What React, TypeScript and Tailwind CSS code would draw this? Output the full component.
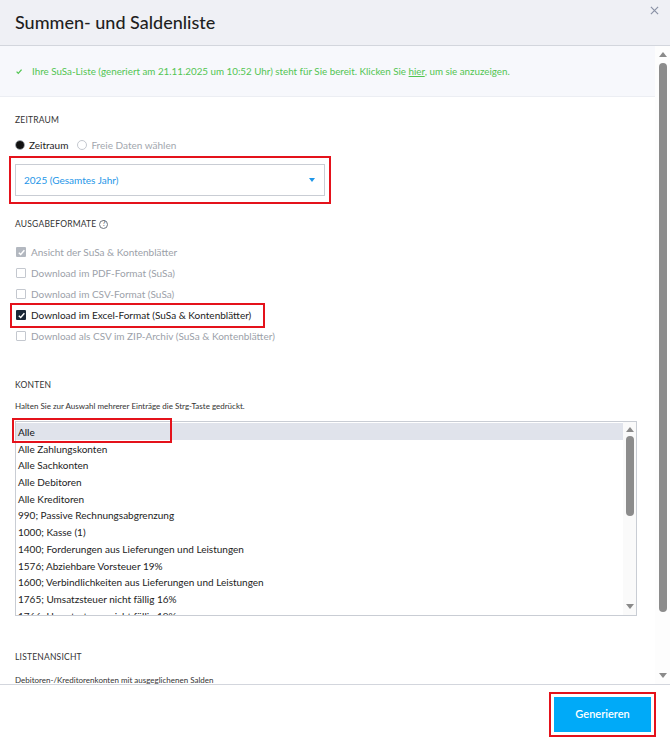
import React from 'react';

const formats = [
  { label: 'Ansicht der SuSa & Kontenblätter', state: 'locked' },
  { label: 'Download im PDF-Format (SuSa)', state: 'off' },
  { label: 'Download im CSV-Format (SuSa)', state: 'off' },
  { label: 'Download im Excel-Format (SuSa & Kontenblätter)', state: 'on' },
  { label: 'Download als CSV im ZIP-Archiv (SuSa & Kontenblätter)', state: 'off' },
];

const accounts = [
  'Alle',
  'Alle Zahlungskonten',
  'Alle Sachkonten',
  'Alle Debitoren',
  'Alle Kreditoren',
  '990; Passive Rechnungsabgrenzung',
  '1000; Kasse (1)',
  '1400; Forderungen aus Lieferungen und Leistungen',
  '1576; Abziehbare Vorsteuer 19%',
  '1600; Verbindlichkeiten aus Lieferungen und Leistungen',
  '1765; Umsatzsteuer nicht fällig 16%',
  '1766; Umsatzsteuer nicht fällig 19%',
];

function Check({ className }: { className?: string }) {
  return (
    <svg viewBox="0 0 10 10" className={className} fill="none">
      <path d="M2 5.2 4.1 7.3 8.2 2.6" stroke="currentColor" strokeWidth="1.6" />
    </svg>
  );
}

function Checkbox({ state }: { state: string }) {
  if (state === 'locked') {
    return (
      <span className="flex h-[10px] w-[10px] items-center justify-center rounded-[1px] bg-[#b3b8c0] text-white">
        <Check className="h-[9px] w-[9px]" />
      </span>
    );
  }
  if (state === 'on') {
    return (
      <span className="flex h-[10px] w-[10px] items-center justify-center rounded-[1px] bg-[#1b2838] text-white">
        <Check className="h-[9px] w-[9px]" />
      </span>
    );
  }
  return <span className="h-[10px] w-[10px] rounded-[1px] border border-[#c4c8cf] bg-white" />;
}

function FormatRow({ label, state }: { label: string; state: string }) {
  return (
    <div className="flex h-[21px] items-center gap-[5px] pl-[1px]">
      <Checkbox state={state} />
      <span className={state === 'on' ? 'text-[10px] text-[#222]' : 'text-[10px] text-[#9ca1a9]'}>{label}</span>
    </div>
  );
}

function SectionLabel({ children }: { children: React.ReactNode }) {
  return <div className="h-[12px] text-[8.5px] leading-[12px] tracking-[0.2px] text-[#333]">{children}</div>;
}

function Arrow({ up }: { up?: boolean }) {
  return (
    <svg viewBox="0 0 8 5" className="h-[5px] w-[8px] text-[#8a8a8a]">
      <path d={up ? 'M0 5 4 0 8 5Z' : 'M0 0 4 5 8 0Z'} fill="currentColor" />
    </svg>
  );
}

export default function App() {
  return (
    <div className="flex h-[738px] w-[670px] flex-col overflow-hidden bg-white font-['Lato',sans-serif] text-[#222]">
      {/* header */}
      <div className="relative flex h-[46px] shrink-0 items-center border-b border-[#d3d6dd] bg-[#eff0f5] pl-[15px]">
        <h1 className="text-[18px] font-medium text-[#1f1f1f]">Summen- und Saldenliste</h1>
        <svg viewBox="0 0 10 10" className="absolute right-[11px] top-[6px] h-[9px] w-[9px] text-[#8991a5]">
          <path d="M1 1 9 9M9 1 1 9" stroke="currentColor" strokeWidth="1.3" />
        </svg>
      </div>

      {/* body */}
      <div className="flex h-[638px] shrink-0">
        <div className="w-[655px] overflow-hidden">
          <div className="flex h-[51px] items-center gap-[9px] border-b border-[#eceef3] bg-[#f7f8fc] pl-[15px] text-[9.8px] text-[#52c552]">
            <Check className="h-[9px] w-[8px]" />
            <span>
              Ihre SuSa-Liste (generiert am 21.11.2025 um 10:52 Uhr) steht für Sie bereit. Klicken Sie{' '}
              <span className="underline">hier</span>, um sie anzuzeigen.
            </span>
          </div>

          <div className="pl-[15px] pr-[18px]">
            <div className="mt-[17px]">
              <SectionLabel>ZEITRAUM</SectionLabel>
            </div>
            <div className="mt-[12px] flex h-[14px] items-center text-[10px]">
              <span className="flex h-[10px] w-[10px] items-center justify-center rounded-full border border-[#9aa0a8] bg-white">
                <span className="h-[8px] w-[8px] rounded-full bg-[#111]" />
              </span>
              <span className="ml-[4px] text-[#222]">Zeitraum</span>
              <span className="ml-[9px] h-[10px] w-[10px] rounded-full border border-[#c4c8cf] bg-white" />
              <span className="ml-[4px] text-[#a2a7ae]">Freie Daten wählen</span>
            </div>

            <div className="-ml-[6px] mt-[4px] w-[322px] border-2 border-[#e4121b] px-[4px] py-[6px]">
              <div className="flex h-[32px] items-center justify-between border border-[#c9cdd4] pl-[8px] pr-[9px] text-[10px] text-[#1e96e8]">
                <span>2025 (Gesamtes Jahr)</span>
                <svg viewBox="0 0 6 4" className="h-[4px] w-[6px]">
                  <path d="M0 0 3 4 6 0Z" fill="currentColor" />
                </svg>
              </div>
            </div>

            <div className="mt-[14px] flex items-center gap-[3px]">
              <SectionLabel>AUSGABEFORMATE</SectionLabel>
              <span className="flex h-[9px] w-[9px] items-center justify-center rounded-full border border-[#6d7480] text-[6.5px] font-bold leading-none text-[#6d7480]">
                ?
              </span>
            </div>

            <div className="mt-[11.5px]">
              {formats.map((f) =>
                f.state === 'on' ? (
                  <div key={f.label} className="-my-[2px] -ml-[5px] w-fit border-2 border-[#e4121b] pl-[3px] pr-[12px]">
                    <FormatRow label={f.label} state={f.state} />
                  </div>
                ) : (
                  <FormatRow key={f.label} label={f.label} state={f.state} />
                )
              )}
            </div>

            <div className="mt-[32.5px]">
              <SectionLabel>KONTEN</SectionLabel>
            </div>
            <div className="mt-[9px] h-[12px] text-[8px] leading-[12px] text-[#333]">
              Halten Sie zur Auswahl mehrerer Einträge die Strg-Taste gedrückt.
            </div>

            <div className="relative mt-[9px] flex h-[195px] border border-[#c9cdd4]">
              <div className="flex-1 overflow-hidden pt-[1px]">
                {accounts.map((a, i) => (
                  <div
                    key={a}
                    className={
                      i === 0
                        ? 'h-[16.7px] bg-[#e0e3eb] pl-[2px] text-[10px] leading-[18px] text-[#111]'
                        : 'h-[16.7px] pl-[2px] text-[10px] leading-[18px] text-[#222]'
                    }
                  >
                    {a}
                  </div>
                ))}
              </div>
              <div className="flex w-[13px] flex-col items-center bg-[#fafafa] pt-[5px]">
                <Arrow up />
                <div className="mt-[4px] h-[80px] w-[8px] rounded-full bg-[#8c8c8c]" />
                <div className="flex-1" />
                <div className="mb-[6px]">
                  <Arrow />
                </div>
              </div>
              <div className="absolute -left-[4px] -top-[4px] h-[25px] w-[160px] border-2 border-[#e4121b]" />
            </div>

            <div className="mt-[35px]">
              <SectionLabel>LISTENANSICHT</SectionLabel>
            </div>
            <div className="mt-[11px] h-[12px] text-[8px] leading-[12px] text-[#333]">
              Debitoren-/Kreditorenkonten mit ausgeglichenen Salden
            </div>
          </div>
        </div>

        {/* page scrollbar */}
        <div className="flex w-[15px] flex-col items-center bg-[#fdfdfd] pt-[6px]">
          <Arrow up />
          <div className="mt-[6px] h-[549px] w-[8px] rounded-full bg-[#8c8c8c]" />
          <div className="flex-1" />
          <div className="mb-[6px]">
            <Arrow />
          </div>
        </div>
      </div>

      {/* footer */}
      <div className="flex h-[54px] shrink-0 items-start justify-end border-t border-[#d3d6dd] pr-[14px] pt-[7px]">
        <div className="border-2 border-[#e4121b] p-[3px]">
          <button className="h-[35px] w-[97px] bg-[#00aaf8] text-[11px] font-semibold text-white">Generieren</button>
        </div>
      </div>
    </div>
  );
}
